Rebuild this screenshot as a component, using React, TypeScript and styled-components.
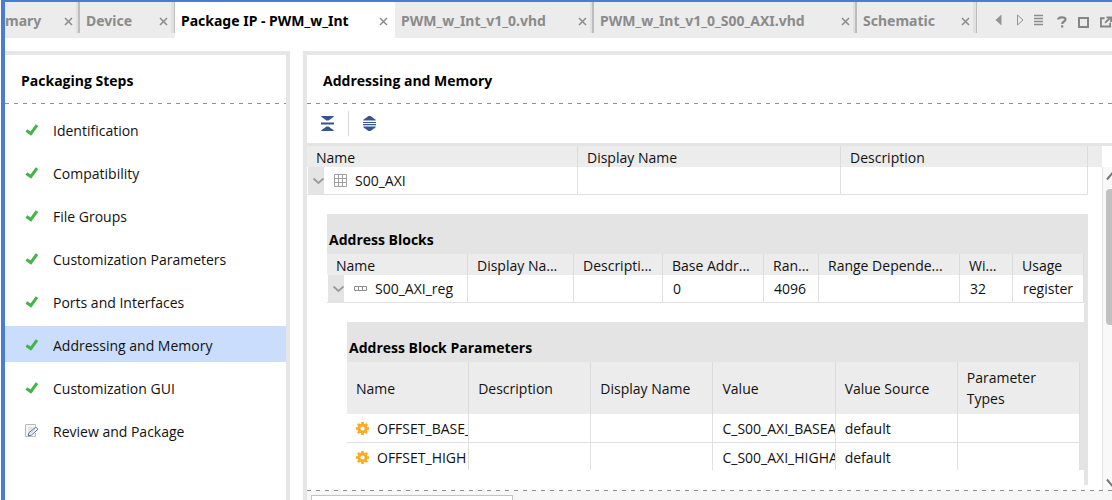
import React from 'react';
import styled, { createGlobalStyle, css } from 'styled-components';

const Global = createGlobalStyle`
  *, *::before, *::after { box-sizing: border-box; }
  body { margin: 0; background: #fff; }
  body, button, input, table {
    font-family: "Open Sans", "Noto Sans", sans-serif;
    font-size: 14px;
    line-height: 21px;
    color: #111;
  }
  button { border: 0; padding: 0; background: none; cursor: pointer; }
  h2, h3, ul { margin: 0; padding: 0; }
`;

const dashes = css`
  background-image: repeating-linear-gradient(90deg, #8f8f8f 0 4px, transparent 4px 9px);
  background-size: 100% 1px;
  background-repeat: no-repeat;
`;

const Shell = styled.div`
  display: flex;
  flex-direction: column;
  height: 100vh;
  overflow: hidden;
  margin-left: 1px;
  border-top: 2px solid #4a7ccf;
  border-left: 4px solid #4a7ccf;
`;

const TabBar = styled.nav`
  display: flex;
  flex: none;
  height: 36px;
  background: #ececec;
  overflow: hidden;
`;

type Divider = 'none' | 'thin' | 'thick';

const Tab = styled.div<{ $width: number; $active?: boolean; $divider: Divider; $cut?: boolean }>`
  display: flex;
  flex: none;
  justify-content: space-between;
  width: ${p => p.$width}px;
  padding: 0 7px 5px ${p => (p.$cut ? 0 : 6)}px;
  background: ${p => (p.$active ? '#fff' : 'transparent')};
  background-image: ${p =>
    p.$divider === 'none'
      ? 'none'
      : p.$divider === 'thin'
        ? 'linear-gradient(90deg, #e0e0e0 3px, #bdbdbd 3px)'
        : 'linear-gradient(90deg, #e0e0e0 2px, #bdbdbd 2px)'};
  background-size: 4px 31px;
  background-position: right top;
  background-repeat: no-repeat;
`;

const TabLabel = styled.button<{ $active?: boolean }>`
  height: 36px;
  font-family: "Noto Sans", "Open Sans", sans-serif;
  font-weight: 700;
  white-space: nowrap;
  color: ${p => (p.$active ? '#000' : '#8b8b8b')};
`;

const CloseButton = styled.button`
  display: flex;
  align-items: center;
  height: 38px;
`;

const TabTools = styled.div`
  display: flex;
  flex: 1 0 auto;
  align-items: center;
  padding-left: 18px;
`;

const ToolButton = styled.button<{ $width: number; $low?: boolean }>`
  display: flex;
  flex: none;
  align-items: center;
  width: ${p => p.$width}px;
  height: 36px;
  padding-top: ${p => (p.$low ? 2 : 0)}px;
`;

const Main = styled.main`
  display: flex;
  flex: 1 0 auto;
  gap: 13px;
  padding-top: 13px;
`;

const StepsPanel = styled.section`
  flex: none;
  width: 285px;
  border-top: 4px solid #e6e6e6;
  border-right: 4px solid #e6e6e6;
`;

const DetailPanel = styled.section`
  flex: 1;
  min-width: 0;
  border-top: 4px solid #e6e6e6;
  border-left: 4px solid #e6e6e6;
`;

const PanelTitle = styled.h2`
  height: 49px;
  padding: 15px 16px 0;
  font-size: 14px;
  line-height: 21px;
  font-weight: 700;
  color: #000;
  ${dashes}
  background-position: left bottom;
`;

const StepList = styled.ul`
  display: flex;
  flex-direction: column;
  gap: 7px;
  padding-top: 7px;
  list-style: none;
`;

const Step = styled.button<{ $selected?: boolean }>`
  display: flex;
  align-items: center;
  gap: 14px;
  width: 100%;
  height: 36px;
  padding: 2px 20px 0;
  background: ${p => (p.$selected ? '#cbddfd' : 'transparent')};
  svg { margin-bottom: 1px; }
`;

const Toolbar = styled.div`
  display: flex;
  align-items: center;
  height: 42px;
  border-bottom: 3px solid #e4e4e4;
`;

const ToolbarButton = styled.button`
  display: flex;
  align-items: center;
  justify-content: center;
  width: 41px;
  height: 25px;
  & + & { border-left: 1px solid #d8d8d8; }
`;

const Scroller = styled.div`
  display: flex;
`;

const Tables = styled.div`
  flex: 1;
  min-width: 0;
  padding-bottom: 5px;
`;

const Scrollbar = styled.div`
  flex: none;
  width: 10px;
  padding-top: 21px;
  overflow: hidden;
  display: flex;
`;

const Track = styled.div`
  display: flex;
  flex: 1;
  flex-direction: column;
  align-items: flex-start;
  padding: 5px 0 3px 3px;
  border-left: 1px solid #e4e4e4;
  background: #f9f9f9;
  svg { flex: none; }
`;

const Thumb = styled.div`
  flex: none;
  width: 12px;
  height: 136px;
  margin: 8px 0 auto;
  border-radius: 4px;
  background: #c1c1c1;
`;

const Grid = styled.table`
  width: 100%;
  table-layout: fixed;
  border-collapse: separate;
  border-spacing: 0;
`;

const Head = styled.th<{ $tall?: boolean }>`
  height: ${p => (p.$tall ? 52 : 21)}px;
  padding: 0 0 0 9px;
  border-right: 1px solid #dcdcdc;
  background: #ececec;
  font-weight: 400;
  line-height: 21px;
  text-align: left;
  white-space: nowrap;
  overflow: hidden;
  ${p =>
    p.$tall
      ? css`
          padding-right: 9px;
          white-space: normal;
        `
      : css`
          padding-top: 2px;
          line-height: 19px;
        `}
`;

const Cell = styled.td<{ $last?: boolean; $inset?: boolean }>`
  height: ${p => (p.$last ? 27 : p.$inset ? 29 : 28)}px;
  padding: ${p => (p.$last ? 2 : 0)}px 0 0 ${p => (p.$inset ? 9 : 10)}px;
  border-right: 1px solid #e0e0e0;
  border-bottom: ${p => (p.$last ? 0 : 1)}px solid #e0e0e0;
  white-space: nowrap;
  overflow: hidden;
`;

const TreeCell = styled(Cell)`
  padding-left: 1px;
`;

const GutterHead = styled(Head)`
  padding: 0;
  border: 0;
`;

const GutterCell = styled(Cell)`
  padding: 0;
  border: 0;
`;

const Line = styled.div`
  display: flex;
  align-items: center;
  gap: 8px;
  svg { flex: none; }
`;

const Expander = styled.button`
  display: flex;
  align-items: center;
  justify-content: flex-end;
  flex: none;
  width: 16px;
  height: 27px;
  margin-right: 2px;
  background: #e4e4e4;
`;

const Blocks = styled.section`
  margin: 19px 14px 0 20px;
  border-right: 4px solid #e4e4e4;
`;

const Params = styled.section`
  margin: 19px 0 0 20px;
  padding-bottom: 15px;
`;

const ParamsTable = styled.div`
  border-right: 4px solid #e4e4e4;
`;

const SectionTitle = styled.h3<{ $bleed?: boolean }>`
  height: 40px;
  margin-right: ${p => (p.$bleed ? -4 : 0)}px;
  padding: 15px 2px 0;
  background: #e4e4e4;
  font-size: 14px;
  line-height: 21px;
  font-weight: 700;
  color: #000;
`;

const Footer = styled.footer`
  padding: 5px 4px;
  background-color: #f7f7f7;
  ${dashes}
  background-position: left top;
`;

const FooterInput = styled.input`
  display: block;
  width: 202px;
  height: 24px;
  border: 1px solid #c4c4c4;
  background: #fff;
`;

const Check = () => (
  <svg width="14" height="12" viewBox="0 0 14 12" aria-hidden="true">
    <path d="M1.400 6.600 5.800 9.600 12 1.200" fill="none" stroke="#42b549" strokeWidth="3" />
  </svg>
);

const EditPage = () => (
  <svg width="14" height="14" viewBox="0 0 14 14" aria-hidden="true">
    <path d="M10.500 9v3.500H.5V.5h10v2" fill="#f5f6f4" stroke="#b9bcb6" />
    <path d="M3 4h6M3 6h4M3 8h3" stroke="#d3d5d0" />
    <path d="m3.200 11.800.7-3L10.800 3.200 12.900 5.200 6.300 11.200z" fill="#fff" stroke="#5a6e9c" />
    <path d="m5.200 9.800 5.400-5" stroke="#c3cbe0" />
  </svg>
);

const Cross = () => (
  <svg width="9" height="9" viewBox="0 0 9 9" aria-hidden="true">
    <path d="m1 1 7 7M8 1 1 8" stroke="#8b8b8b" strokeWidth="1.500" />
  </svg>
);

const CollapseAll = () => (
  <svg width="13" height="15" viewBox="0 0 13 15" aria-hidden="true">
    <path d="M.3 0h12.400v.8L7.500 4.600h-2L.3.8zM0 6.600h13v1.900H0zM5.500 10.400h2L12.700 14.200v.8H.3v-.8z" fill="#35558f" />
  </svg>
);

const ExpandAll = () => (
  <svg width="13" height="15" viewBox="0 0 13 15" aria-hidden="true">
    <path d="M5.500 0h2L12.700 3.800v.8H.3v-.8zM0 5.900h13v1.100H0zM0 8.100h13v1.100H0zM.3 10.400h12.400v.8L7.500 15h-2L.3 11.200z" fill="#35558f" />
  </svg>
);

const Chevron = () => (
  <svg width="12" height="8" viewBox="0 0 12 8" aria-hidden="true">
    <path d="m1.500 1.500 5 4.500 5-4.500" fill="none" stroke="#9a9a9a" strokeWidth="1.700" />
  </svg>
);

const GridIcon = () => (
  <svg width="13" height="13" viewBox="0 0 13 13" aria-hidden="true">
    <path d="M.5.5h12v12H.5zM4.500.5v12M8.500.5v12M.5 4.500h12M.5 8.500h12" fill="none" stroke="#a0a0a0" />
  </svg>
);

const RegisterIcon = () => (
  <svg width="13" height="13" viewBox="0 0 13 13" aria-hidden="true">
    <path d="M.5 4.500h12v4H.5zM4.500 4.500v4M8.500 4.500v4" fill="none" stroke="#8f8f8f" />
  </svg>
);

const Gear = () => (
  <svg width="13" height="13" viewBox="-6.500 -6.500 13 13" aria-hidden="true">
    <circle r="3.500" fill="none" stroke="#f9ab22" strokeWidth="2.800" />
    {[0, 45, 90, 135, 180, 225, 270, 315].map(a => (
      <path key={a} d="M-1.300-4h2.600V-6.500h-2.600z" transform={`rotate(${a})`} fill="#f9ab22" />
    ))}
  </svg>
);

const tabs: { label: string; width: number; divider: Divider; active?: boolean; cut?: boolean }[] = [
  { label: 'mary', width: 75, divider: 'thick', cut: true },
  { label: 'Device', width: 95, divider: 'thin' },
  { label: 'Package IP - PWM_w_Int', width: 220, divider: 'none', active: true },
  { label: 'PWM_w_Int_v1_0.vhd', width: 199, divider: 'thick' },
  { label: 'PWM_w_Int_v1_0_S00_AXI.vhd', width: 263, divider: 'thick' },
  { label: 'Schematic', width: 120, divider: 'thin' },
];

const steps = [
  'Identification',
  'Compatibility',
  'File Groups',
  'Customization Parameters',
  'Ports and Interfaces',
  'Addressing and Memory',
  'Customization GUI',
  'Review and Package',
];

const blockColumns: { label: string; width?: number; value?: string }[] = [
  { label: 'Name', width: 141 },
  { label: 'Display Na...', width: 106 },
  { label: 'Descripti...', width: 89 },
  { label: 'Base Addr...', width: 101, value: '0' },
  { label: 'Ran...', width: 55, value: '4096' },
  { label: 'Range Depende...' },
  { label: 'Wi...', width: 53, value: '32' },
  { label: 'Usage', width: 71, value: 'register' },
];

const paramColumns = ['Name', 'Description', 'Display Name', 'Value', 'Value Source', 'Parameter Types'];

const params = [
  ['OFFSET_BASE_', '', '', 'C_S00_AXI_BASEA', 'default', ''],
  ['OFFSET_HIGH', '', '', 'C_S00_AXI_HIGHA', 'default', ''],
];

export default function App() {
  return (
    <>
      <Global />
      <Shell>
        <TabBar>
          {tabs.map(t => (
            <Tab key={t.label} $width={t.width} $active={t.active} $divider={t.divider} $cut={t.cut}>
              <TabLabel $active={t.active}>{t.label}</TabLabel>
              <CloseButton aria-label="Close"><Cross /></CloseButton>
            </Tab>
          ))}
          <TabTools>
            <ToolButton $width={22} aria-label="Previous tab">
              <svg width="7" height="12" viewBox="0 0 7 12"><path d="M6.500.5v11L.5 6z" fill="#949494" /></svg>
            </ToolButton>
            <ToolButton $width={17} aria-label="Next tab">
              <svg width="7" height="12" viewBox="0 0 7 12"><path d="M.5 1v10L6 6z" fill="none" stroke="#949494" /></svg>
            </ToolButton>
            <ToolButton $width={23} aria-label="Tab list">
              <svg width="9" height="12" viewBox="0 0 9 12"><path d="M0 1.500h9M0 4.500h9M0 7.500h9M0 10.500h9" stroke="#8b8b8b" strokeWidth="1.700" /></svg>
            </ToolButton>
            <ToolButton $width={21} $low aria-label="Help">
              <svg width="10" height="16" viewBox="0 0 10 16">
                <path d="M1.200 6.500C1.200 3.800 8.500 3.400 8.500 6.500c0 2-3.300 2.100-3.300 4.500M5.200 12.300v2.300" fill="none" stroke="#858585" strokeWidth="2.200" />
              </svg>
            </ToolButton>
            <ToolButton $width={22} $low aria-label="Maximize">
              <svg width="11" height="16" viewBox="0 0 11 16"><path d="M1 5h9v9H1z" fill="none" stroke="#858585" strokeWidth="2" /></svg>
            </ToolButton>
            <ToolButton $width={12} $low aria-label="Float">
              <svg width="13" height="16" viewBox="0 0 13 16">
                <path d="M5 5H1v9h10v-4" fill="none" stroke="#858585" strokeWidth="2" />
                <path d="m5.500 10 5-5M7 4h5v5" fill="none" stroke="#858585" strokeWidth="2" />
              </svg>
            </ToolButton>
          </TabTools>
        </TabBar>

        <Main>
          <StepsPanel>
            <PanelTitle>Packaging Steps</PanelTitle>
            <StepList>
              {steps.map((s, i) => (
                <li key={s}>
                  <Step $selected={i === 5}>
                    {i === steps.length - 1 ? <EditPage /> : <Check />}
                    <span>{s}</span>
                  </Step>
                </li>
              ))}
            </StepList>
          </StepsPanel>

          <DetailPanel>
            <PanelTitle>Addressing and Memory</PanelTitle>
            <Toolbar>
              <ToolbarButton aria-label="Collapse all"><CollapseAll /></ToolbarButton>
              <ToolbarButton aria-label="Expand all"><ExpandAll /></ToolbarButton>
            </Toolbar>
            <Scroller>
              <Tables>
                <Grid>
                  <colgroup>
                    <col style={{ width: 271 }} />
                    <col style={{ width: 263 }} />
                    <col />
                    <col style={{ width: 14 }} />
                  </colgroup>
                  <thead>
                    <tr>
                      <Head>Name</Head>
                      <Head>Display Name</Head>
                      <Head>Description</Head>
                      <GutterHead />
                    </tr>
                  </thead>
                  <tbody>
                    <tr>
                      <TreeCell>
                        <Line>
                          <Expander aria-label="Toggle S00_AXI"><Chevron /></Expander>
                          <GridIcon />
                          <span>S00_AXI</span>
                        </Line>
                      </TreeCell>
                      <Cell />
                      <Cell />
                      <GutterCell />
                    </tr>
                  </tbody>
                </Grid>

                <Blocks>
                  <SectionTitle>Address Blocks</SectionTitle>
                  <Grid>
                    <colgroup>
                      {blockColumns.map(c => <col key={c.label} style={{ width: c.width }} />)}
                    </colgroup>
                    <thead>
                      <tr>{blockColumns.map(c => <Head key={c.label}>{c.label}</Head>)}</tr>
                    </thead>
                    <tbody>
                      <tr>
                        <TreeCell>
                          <Line>
                            <Expander aria-label="Toggle S00_AXI_reg"><Chevron /></Expander>
                            <RegisterIcon />
                            <span>S00_AXI_reg</span>
                          </Line>
                        </TreeCell>
                        {blockColumns.slice(1).map(c => <Cell key={c.label}>{c.value}</Cell>)}
                      </tr>
                    </tbody>
                  </Grid>

                  <Params>
                    <SectionTitle>Address Block Parameters</SectionTitle>
                    <ParamsTable>
                      <Grid>
                        <thead>
                          <tr>{paramColumns.map(c => <Head key={c} $tall>{c}</Head>)}</tr>
                        </thead>
                        <tbody>
                          {params.map((row, r) => (
                            <tr key={row[0]}>
                              {row.map((v, i) => (
                                <Cell key={i} $inset $last={r === 1}>
                                  {i === 0 ? <Line><Gear /><span>{v}</span></Line> : v}
                                </Cell>
                              ))}
                            </tr>
                          ))}
                        </tbody>
                      </Grid>
                    </ParamsTable>
                  </Params>
                </Blocks>
              </Tables>
              <Scrollbar>
                <Track>
                  <svg width="12" height="9" viewBox="0 0 12 9"><path d="m1 7.500 5-6 5 6" fill="none" stroke="#777" strokeWidth="2" /></svg>
                  <Thumb />
                  <svg width="12" height="9" viewBox="0 0 12 9"><path d="m1 1.500 5 6 5-6" fill="none" stroke="#777" strokeWidth="2" /></svg>
                </Track>
              </Scrollbar>
            </Scroller>
            <Footer>
              <FooterInput aria-label="Console filter" />
            </Footer>
          </DetailPanel>
        </Main>
      </Shell>
    </>
  );
}
